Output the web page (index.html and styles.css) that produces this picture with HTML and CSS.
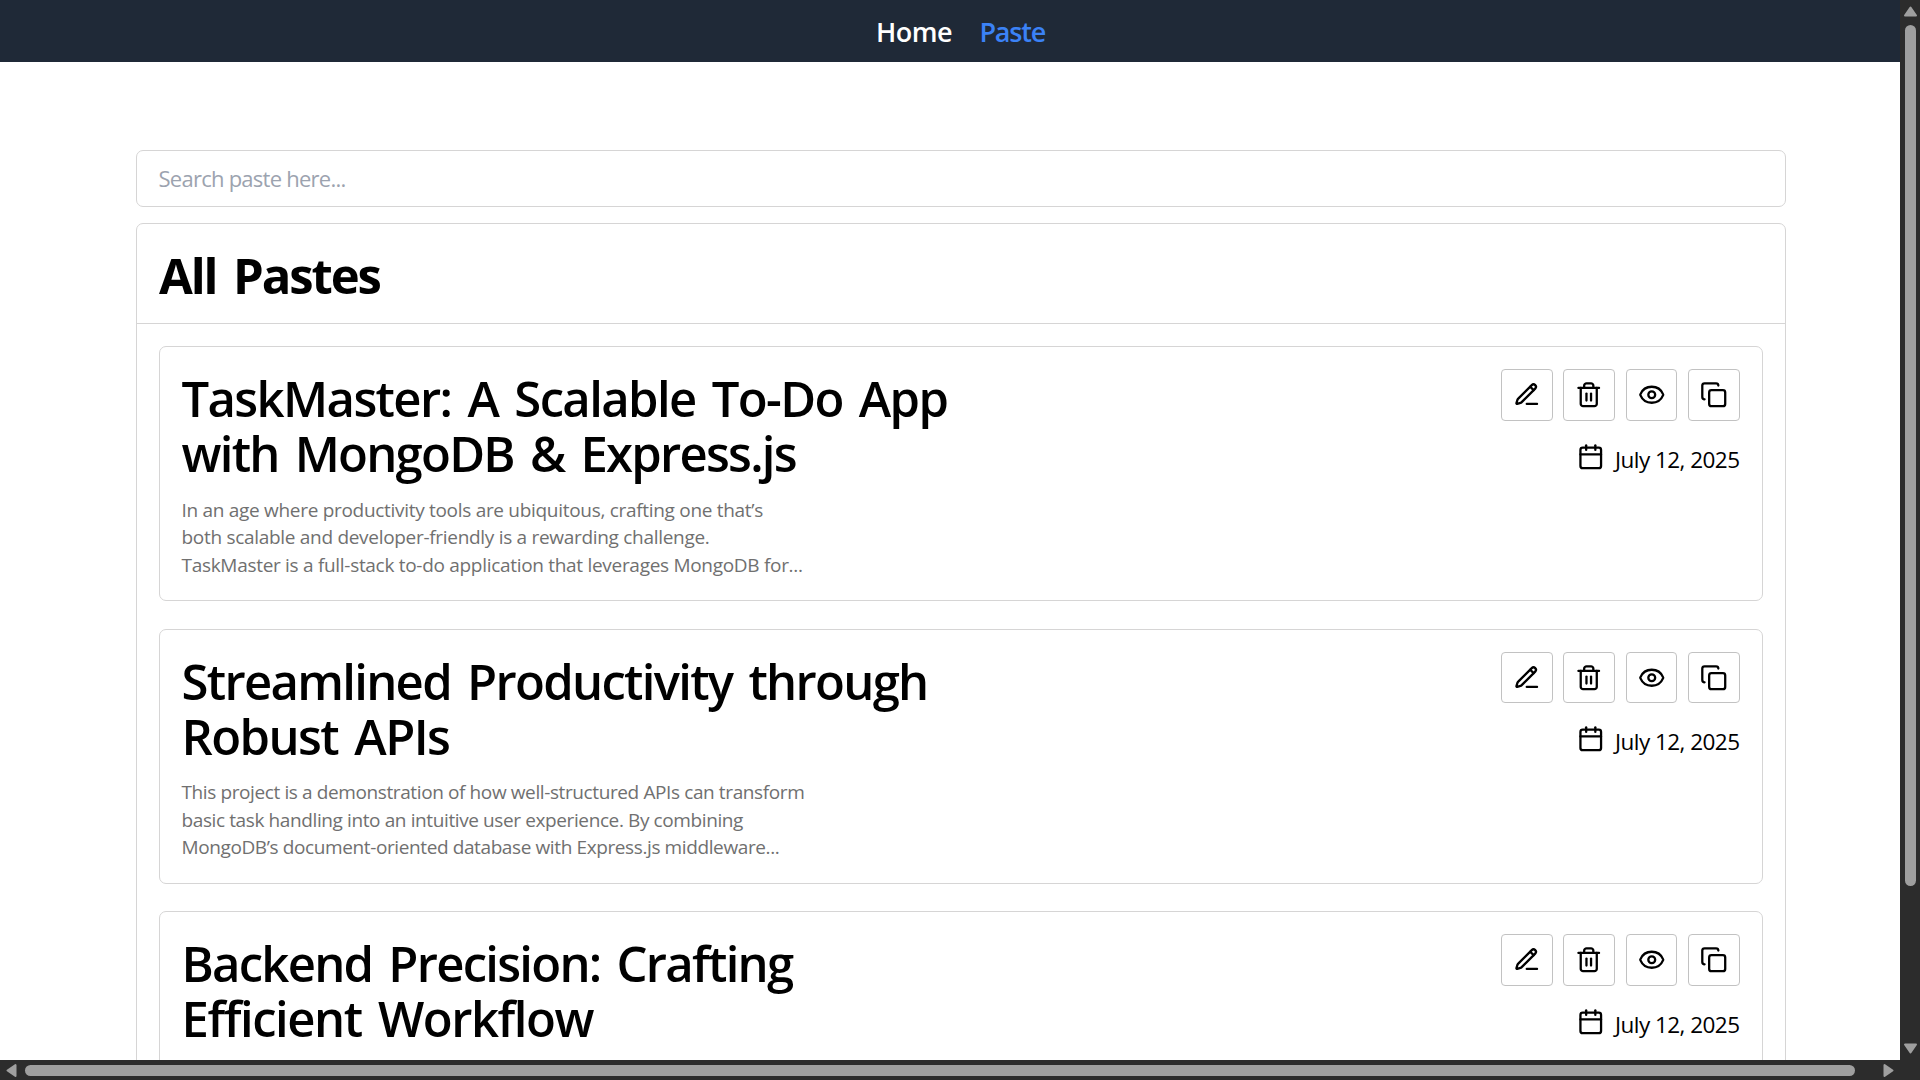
FILE: index.html
```html
<!DOCTYPE html>
<html lang="en">
<head>
<meta charset="utf-8">
<title>Pastes</title>
<link rel="stylesheet" href="styles.css">
</head>
<body>
<svg class="sprite" aria-hidden="true">
  <symbol id="pen" viewBox="0 0 24 24"><path d="M12 20h9"/><path d="M16.376 3.622a1 1 0 0 1 3.002 3.002L7.368 18.635a2 2 0 0 1-.855.506l-2.872.838a.5.5 0 0 1-.62-.62l.838-2.872a2 2 0 0 1 .506-.854z"/><path d="m15 5 3 3"/></symbol>
  <symbol id="trash" viewBox="0 0 24 24"><path d="M3 6h18"/><path d="M19 6v14c0 1-1 2-2 2H7c-1 0-2-1-2-2V6"/><path d="M8 6V4c0-1 1-2 2-2h4c1 0 2 1 2 2v2"/><path d="M10 11v6"/><path d="M14 11v6"/></symbol>
  <symbol id="eye" viewBox="0 0 24 24"><path d="M2.062 12.348a1 1 0 0 1 0-.696 10.75 10.75 0 0 1 19.876 0 1 1 0 0 1 0 .696 10.75 10.75 0 0 1-19.876 0"/><circle cx="12" cy="12" r="3"/></symbol>
  <symbol id="copy" viewBox="0 0 24 24"><rect width="14" height="14" x="8" y="8" rx="2"/><path d="M4 16c-1.1 0-2-.9-2-2V4c0-1.1.9-2 2-2h10c1.1 0 2 .9 2 2"/></symbol>
  <symbol id="calendar" viewBox="0 0 24 24"><path d="M8 2v4"/><path d="M16 2v4"/><rect width="18" height="18" x="3" y="4" rx="2"/><path d="M3 10h18"/></symbol>
</svg>
<div class="window">
  <div class="viewport">
    <nav class="nav"><a class="nav-link">Home</a><a class="nav-link active">Paste</a></nav>
    <main class="page">
      <div class="search">Search paste here...</div>
      <section class="panel">
        <h1 class="panel-title">All Pastes</h1>
        <div class="list">
          <article class="card">
            <div class="text">
              <h2 class="title"><span class="line t1">TaskMaster: A Scalable To-Do App</span><span class="line t2">with MongoDB &amp; Express.js</span></h2>
              <p class="desc"><span class="line">In an age where productivity tools are ubiquitous, crafting one that’s</span><span class="line">both scalable and developer-friendly is a rewarding challenge.</span><span class="line">TaskMaster is a full-stack to-do application that leverages MongoDB for...</span></p>
            </div>
            <div class="side">
              <div class="actions"><button class="btn"><svg class="icon"><use href="#pen"/></svg></button><button class="btn"><svg class="icon"><use href="#trash"/></svg></button><button class="btn"><svg class="icon"><use href="#eye"/></svg></button><button class="btn"><svg class="icon"><use href="#copy"/></svg></button></div>
              <div class="date"><svg class="icon"><use href="#calendar"/></svg><span class="day">July 12, 2025</span></div>
            </div>
          </article>
          <article class="card">
            <div class="text">
              <h2 class="title"><span class="line t3">Streamlined Productivity through</span><span class="line t4">Robust APIs</span></h2>
              <p class="desc tight"><span class="line">This project is a demonstration of how well-structured APIs can transform</span><span class="line">basic task handling into an intuitive user experience. By combining</span><span class="line">MongoDB’s document-oriented database with Express.js middleware...</span></p>
            </div>
            <div class="side">
              <div class="actions"><button class="btn"><svg class="icon"><use href="#pen"/></svg></button><button class="btn"><svg class="icon"><use href="#trash"/></svg></button><button class="btn"><svg class="icon"><use href="#eye"/></svg></button><button class="btn"><svg class="icon"><use href="#copy"/></svg></button></div>
              <div class="date"><svg class="icon"><use href="#calendar"/></svg><span class="day">July 12, 2025</span></div>
            </div>
          </article>
          <article class="card">
            <div class="text">
              <h2 class="title"><span class="line t5">Backend Precision: Crafting</span><span class="line t6">Efficient Workflow</span></h2>
            </div>
            <div class="side">
              <div class="actions"><button class="btn"><svg class="icon"><use href="#pen"/></svg></button><button class="btn"><svg class="icon"><use href="#trash"/></svg></button><button class="btn"><svg class="icon"><use href="#eye"/></svg></button><button class="btn"><svg class="icon"><use href="#copy"/></svg></button></div>
              <div class="date"><svg class="icon"><use href="#calendar"/></svg><span class="day">July 12, 2025</span></div>
            </div>
          </article>
        </div>
      </section>
    </main>
  </div>
  <div class="vbar">
    <svg class="arrow" viewBox="0 0 20 20"><path d="M10.5 7.5 16 15.5H5z"/></svg>
    <div class="vthumb"></div>
    <svg class="arrow end" viewBox="0 0 20 20"><path d="M5 4.5h11l-5.5 8z"/></svg>
  </div>
  <div class="hbar">
    <svg class="arrow" viewBox="0 0 20 20"><path d="M7.5 10.5 15.500 5v11z"/></svg>
    <div class="hthumb"></div>
    <svg class="arrow end" viewBox="0 0 20 20"><path d="M4.500 5v11l8-5.500z"/></svg>
  </div>
</div>
</body>
</html>
```
FILE: styles.css
```css
* { box-sizing: border-box; margin: 0; padding: 0; }
body { font-family: "Open Sans", "Noto Sans", sans-serif; color: #000; background: #fff; overflow: hidden; }
.sprite { display: none; }
.window { display: grid; grid-template: 1060px 20px / 1900px 20px; width: 1920px; height: 1080px; }
.viewport { overflow: hidden; }

.nav { display: flex; justify-content: center; gap: 27.5px; height: 62px; padding: 14px 0 0 21px; background: #1f2937; }
.nav-link { font-size: 27px; line-height: 36px; font-weight: 600; letter-spacing: -0.5px; color: #fff; }
.nav-link.active { color: #3b82f6; letter-spacing: -1.2px; }

.page { display: flex; flex-direction: column; gap: 16px; padding: 88px 114px 0 136px; }
.search { height: 57px; padding: 0 21.5px; border: 1px solid #d6d5d5; border-radius: 7px; font-size: 22px; line-height: 55px; letter-spacing: -0.75px; color: #9ca3af; }
.panel { border: 1px solid #d6d5d5; border-radius: 7px; }
.panel-title { height: 100px; padding: 24px 22px 0; border-bottom: 1px solid #d6d5d5; font-size: 49px; line-height: 55px; font-weight: 700; letter-spacing: -2.1px; word-spacing: 6px; }
.list { display: flex; flex-direction: column; gap: 27.5px; padding: 22px; }
.card { display: flex; justify-content: space-between; height: 255px; padding: 22px 22.5px 0 21.5px; border: 1px solid #d6d5d5; border-radius: 7px; }
.line { display: block; white-space: nowrap; }
.text { padding-top: 2px; }
.title { font-size: 49px; line-height: 55px; font-weight: 600; word-spacing: 5px; }
.t1 { letter-spacing: -1.62px; }
.t2 { letter-spacing: -1.74px; }
.t3 { letter-spacing: -1.69px; }
.t4 { letter-spacing: -1.57px; }
.t5 { letter-spacing: -1.73px; }
.t6 { letter-spacing: -1.45px; }
.desc { margin-top: 15.5px; font-size: 19px; line-height: 27.5px; letter-spacing: -0.3px; color: #707070; }
.desc.tight { letter-spacing: -0.39px; }

.side { display: flex; flex-direction: column; align-items: flex-end; }
.actions { display: flex; gap: 10.7px; }
.btn { display: flex; align-items: center; justify-content: center; width: 51.6px; height: 51.6px; border: 1px solid #c2c2c2; border-radius: 4px; background: #fff; }
.icon { width: 27.5px; height: 27.5px; fill: none; stroke: #000; stroke-width: 2; stroke-linecap: round; stroke-linejoin: round; }
.date { display: flex; align-items: flex-start; gap: 11px; margin-top: 22px; }
.day { padding-top: 1px; font-size: 22.5px; line-height: 31px; letter-spacing: -0.54px; white-space: nowrap; }

.vbar { grid-row: 1 / 3; grid-column: 2; display: flex; flex-direction: column; align-items: center; background: #2c2c2c; }
.hbar { grid-row: 2; grid-column: 1; display: flex; align-items: center; background: #2c2c2c; }
.arrow { width: 20px; height: 20px; flex: none; fill: #9f9f9f; stroke: #9f9f9f; stroke-width: 2; stroke-linejoin: round; }
.vthumb { width: 11px; height: 861px; margin: 5px 0 0 1px; border-radius: 6px; background: #9f9f9f; }
.hthumb { width: 1830px; height: 11px; margin: 1px 0 0 5px; border-radius: 6px; background: #9f9f9f; }
.vbar .end { margin: auto 0 20px; }
.hbar .end { margin: 0 0 0 auto; }
```
